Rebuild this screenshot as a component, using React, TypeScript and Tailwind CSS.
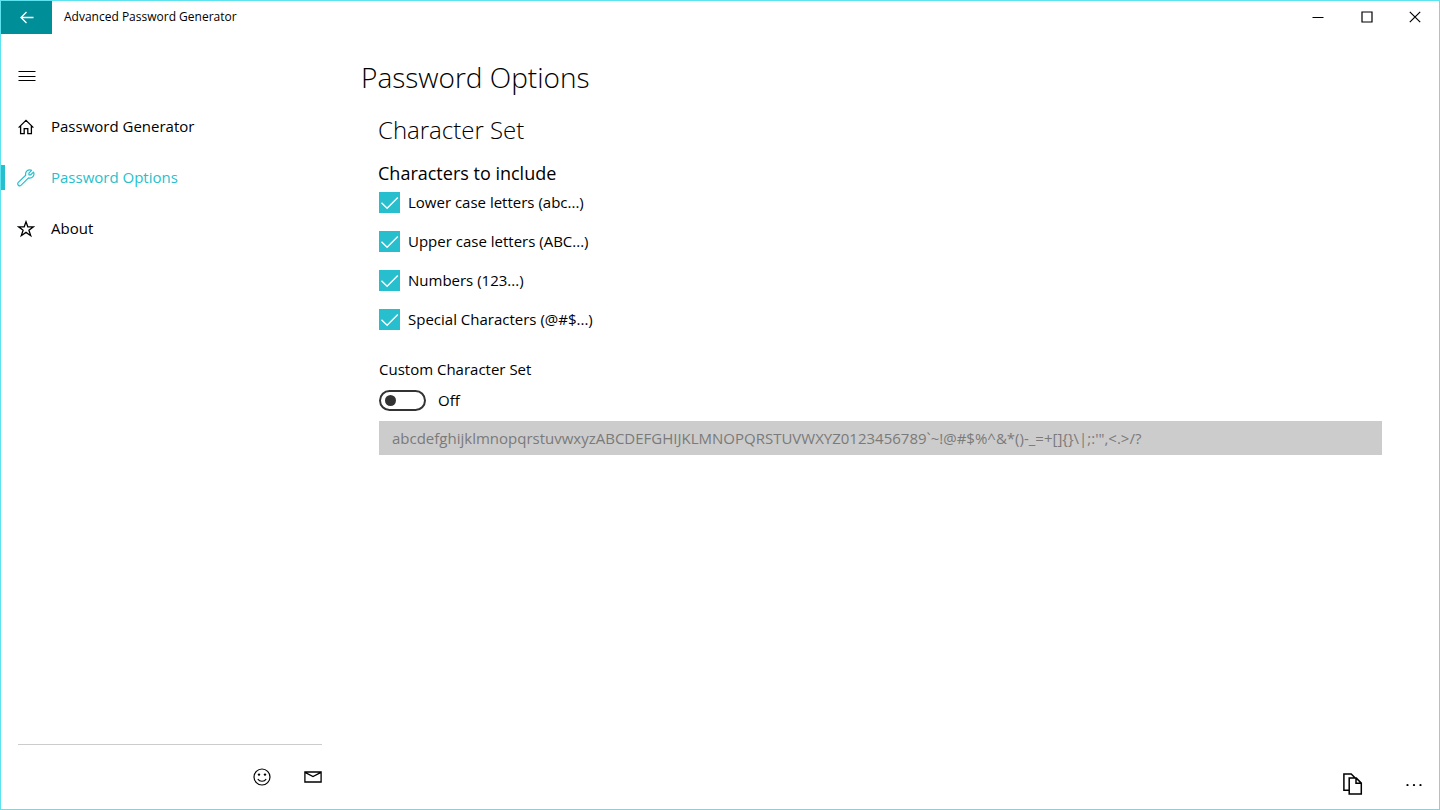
import { useState } from 'react';
import type { ReactNode } from 'react';

interface NavItemProps {
  icon: ReactNode;
  label: string;
  active?: boolean;
  onClick: () => void;
}

interface CheckOptionProps {
  id: string;
  label: string;
}

const HomeIcon = () => (
  <svg width="18" height="18" viewBox="0 0 18 18" fill="none" stroke="currentColor" strokeWidth="1.3">
    <path d="M1.6 9.6 9 2.4l7.4 7.2M3.6 8v7.6h3.6v-5h3.6v5h3.6V8" />
  </svg>
);

const WrenchIcon = () => (
  <svg width="18" height="18" viewBox="0 0 18 18" fill="none" stroke="currentColor" strokeWidth="1.2" strokeLinejoin="round">
    <path d="m14.6 1.3-2.7 2.8v1.7h1.8l2.8-2.7c1.6 3.4-1.4 6.6-5 5.8l-7.3 7.3A2 2 0 0 1 1.3 13.4L8.7 6.2C7.9 2.6 11.2-.3 14.6 1.3z" />
  </svg>
);

const StarIcon = () => (
  <svg width="18" height="18" viewBox="0 0 18 18" fill="none" stroke="currentColor" strokeWidth="1.3">
    <path d="m9 1.8 1.8 5h5.6l-4.5 3.4 1.8 5.5L9 12.4l-4.7 3.3 1.8-5.5-4.5-3.4h5.6z" />
  </svg>
);

const SmileIcon = () => (
  <svg width="18" height="18" viewBox="0 0 18 18" fill="none" stroke="currentColor" strokeWidth="1.2">
    <circle cx="9" cy="9" r="8" />
    <path d="M4.8 11c1.8 3 6.6 3 8.4 0" />
    <circle cx="6" cy="6.6" r="1.2" fill="currentColor" stroke="none" />
    <circle cx="12" cy="6.6" r="1.2" fill="currentColor" stroke="none" />
  </svg>
);

const MailIcon = () => (
  <svg width="18" height="18" viewBox="0 0 18 18" fill="none" stroke="currentColor" strokeWidth="1.3">
    <path d="M.9 4h16.2v10H.9zM1 4.4l8 4.2 8-4.2" />
  </svg>
);

const CopyIcon = () => (
  <svg width="22" height="24" viewBox="0 0 22 24" fill="none" stroke="currentColor" strokeWidth="1.5">
    <path d="M6.8 18.2H1.9V1.9h7.3l3.8 3.8M7.2 6.1h7.1l5 5v11H7.2zM14 6.1v5.2h5.3" />
  </svg>
);

const NavItem: React.FC<NavItemProps> = ({ icon, label, active, onClick }) => {
  return (
    <li>
      <button
        onClick={onClick}
        className={`flex h-[51px] w-full items-center text-left text-[15px] ${active ? 'text-[#27bfcd]' : 'text-black'}`}
      >
        <span className={`h-[25px] w-1 ${active ? 'bg-[#27bfcd]' : ''}`} />
        <span className="flex w-[46px] justify-center pr-1">{icon}</span>
        <span>{label}</span>
      </button>
    </li>
  );
};

const CheckOption: React.FC<CheckOptionProps> = ({ id, label }) => {
  return (
    <div className="flex h-[39px] items-center gap-2">
      <span className="grid">
        <input
          id={id}
          type="checkbox"
          defaultChecked
          className="peer col-start-1 row-start-1 size-[21px] appearance-none border-2 border-[#333333] checked:border-0 checked:bg-[#27bfcd]"
        />
        <svg
          className="pointer-events-none invisible col-start-1 row-start-1 text-white peer-checked:visible"
          width="21"
          height="21"
          viewBox="0 0 21 21"
          fill="none"
          stroke="currentColor"
          strokeWidth="1.4"
        >
          <path d="m2.5 10.8 5.6 5.5L18.8 5.6" />
        </svg>
      </span>
      <label htmlFor={id} className="text-[15px]">
        {label}
      </label>
    </div>
  );
};

const defaultCharacters =
  'abcdefghijklmnopqrstuvwxyzABCDEFGHIJKLMNOPQRSTUVWXYZ0123456789`~!@#$%^&*()-_=+[]{}\\|;:\'",<.>/?';

const App = () => {
  const [page, setPage] = useState('options');
  const [custom, setCustom] = useState(false);
  const [characters, setCharacters] = useState(defaultCharacters);

  return (
    <div className="flex min-h-screen flex-col border border-[#5ce3ef] bg-white font-['Open_Sans','Noto_Sans',sans-serif] text-black">
      <header className="flex h-8 items-center">
        <button aria-label="Back" className="flex h-[33px] w-[51px] items-center justify-center self-start bg-[#008f98] text-white">
          <svg width="14" height="14" viewBox="0 0 14 14" fill="none" stroke="currentColor" strokeWidth="1.3">
            <path d="M13.5 6.5H1.2M6.5 1 1 6.5 6.5 12" />
          </svg>
        </button>
        <span className="flex-1 pl-3 text-xs">Advanced Password Generator</span>
        <button aria-label="Minimize" className="flex h-full w-12 items-center justify-center">
          <svg width="12" height="12" viewBox="0 0 12 12" fill="none" stroke="currentColor">
            <path d="M.5 6.5h11" />
          </svg>
        </button>
        <button aria-label="Maximize" className="flex h-full w-[49px] items-center justify-center">
          <svg width="12" height="12" viewBox="0 0 12 12" fill="none" stroke="currentColor" strokeWidth="1.2">
            <path d="M1 1h10v10H1z" />
          </svg>
        </button>
        <button aria-label="Close" className="flex h-full w-12 items-center justify-center">
          <svg width="12" height="12" viewBox="0 0 12 12" fill="none" stroke="currentColor" strokeWidth="1.2">
            <path d="m.8.8 10.4 10.4M11.2.8.8 11.2" />
          </svg>
        </button>
      </header>

      <div className="flex flex-1">
        <nav className="flex w-[337px] shrink-0 flex-col justify-between pt-[17px]">
          <div>
            <button aria-label="Menu" className="flex h-[51px] w-[51px] items-center justify-center">
              <svg width="18" height="18" viewBox="0 0 18 18" fill="none" stroke="currentColor" strokeWidth="1.2">
                <path d="M.5 4.5h17M.5 9.5h17M.5 13.5h17" />
              </svg>
            </button>
            <ul>
              <NavItem icon={<HomeIcon />} label="Password Generator" active={page === 'generator'} onClick={() => setPage('generator')} />
              <NavItem icon={<WrenchIcon />} label="Password Options" active={page === 'options'} onClick={() => setPage('options')} />
              <NavItem icon={<StarIcon />} label="About" active={page === 'about'} onClick={() => setPage('about')} />
            </ul>
          </div>
          <div className="mr-4 ml-[17px] flex justify-end border-t border-[#cccccc] pt-[6px] pb-[7px]">
            <button aria-label="Feedback" className="flex h-[51px] w-[51px] items-center justify-center">
              <SmileIcon />
            </button>
            <button aria-label="Mail" className="-mr-4 flex h-[51px] w-[51px] items-center justify-center">
              <MailIcon />
            </button>
          </div>
        </nav>

        <main className="flex flex-1 flex-col justify-between pl-[23px]">
          <div className="pt-6 pr-[57px]">
            <h1 className="text-[28px] leading-10 font-light">Password Options</h1>
            <section className="pt-3 pl-[17px]">
              <h2 className="text-2xl leading-[42px] font-light">Character Set</h2>
              <h3 className="pt-2 text-lg leading-7">Characters to include</h3>
              <div className="-mt-1 pl-px">
                <CheckOption id="lower" label="Lower case letters (abc...)" />
                <CheckOption id="upper" label="Upper case letters (ABC...)" />
                <CheckOption id="numbers" label="Numbers (123...)" />
                <CheckOption id="special" label="Special Characters (@#$...)" />
                <label htmlFor="custom" className="block pt-[14px] text-[15px] leading-8">
                  Custom Character Set
                </label>
                <div className="flex h-[30px] items-center gap-3">
                  <input
                    id="custom"
                    type="checkbox"
                    role="switch"
                    checked={custom}
                    onChange={(e) => setCustom(e.target.checked)}
                    className="flex h-[21px] w-[47px] appearance-none items-center rounded-full border-2 border-[#333333] px-1 before:size-[11px] before:rounded-full before:bg-[#333333] checked:justify-end checked:border-[#27bfcd] checked:bg-[#27bfcd] checked:before:bg-white"
                  />
                  <span className="text-[15px]">{custom ? 'On' : 'Off'}</span>
                </div>
                <input
                  type="text"
                  aria-label="Custom characters"
                  value={characters}
                  onChange={(e) => setCharacters(e.target.value)}
                  disabled={!custom}
                  className="mt-[6px] h-[34px] w-full border border-[#999999] px-3 text-[15px] disabled:border-[#cccccc] disabled:bg-[#cccccc] disabled:text-[#7a7a7a]"
                />
              </div>
            </section>
          </div>
          <div className="flex h-[51px] items-center justify-end">
            <button aria-label="Copy" className="flex h-full w-[70px] items-center justify-center">
              <CopyIcon />
            </button>
            <button aria-label="More" className="flex h-full w-[51px] items-center justify-center">
              <svg width="18" height="4" viewBox="0 0 18 4" fill="currentColor">
                <circle cx="2.5" cy="3" r="1.1" />
                <circle cx="9" cy="3" r="1.1" />
                <circle cx="15.5" cy="3" r="1.1" />
              </svg>
            </button>
          </div>
        </main>
      </div>
    </div>
  );
};

export default App;
